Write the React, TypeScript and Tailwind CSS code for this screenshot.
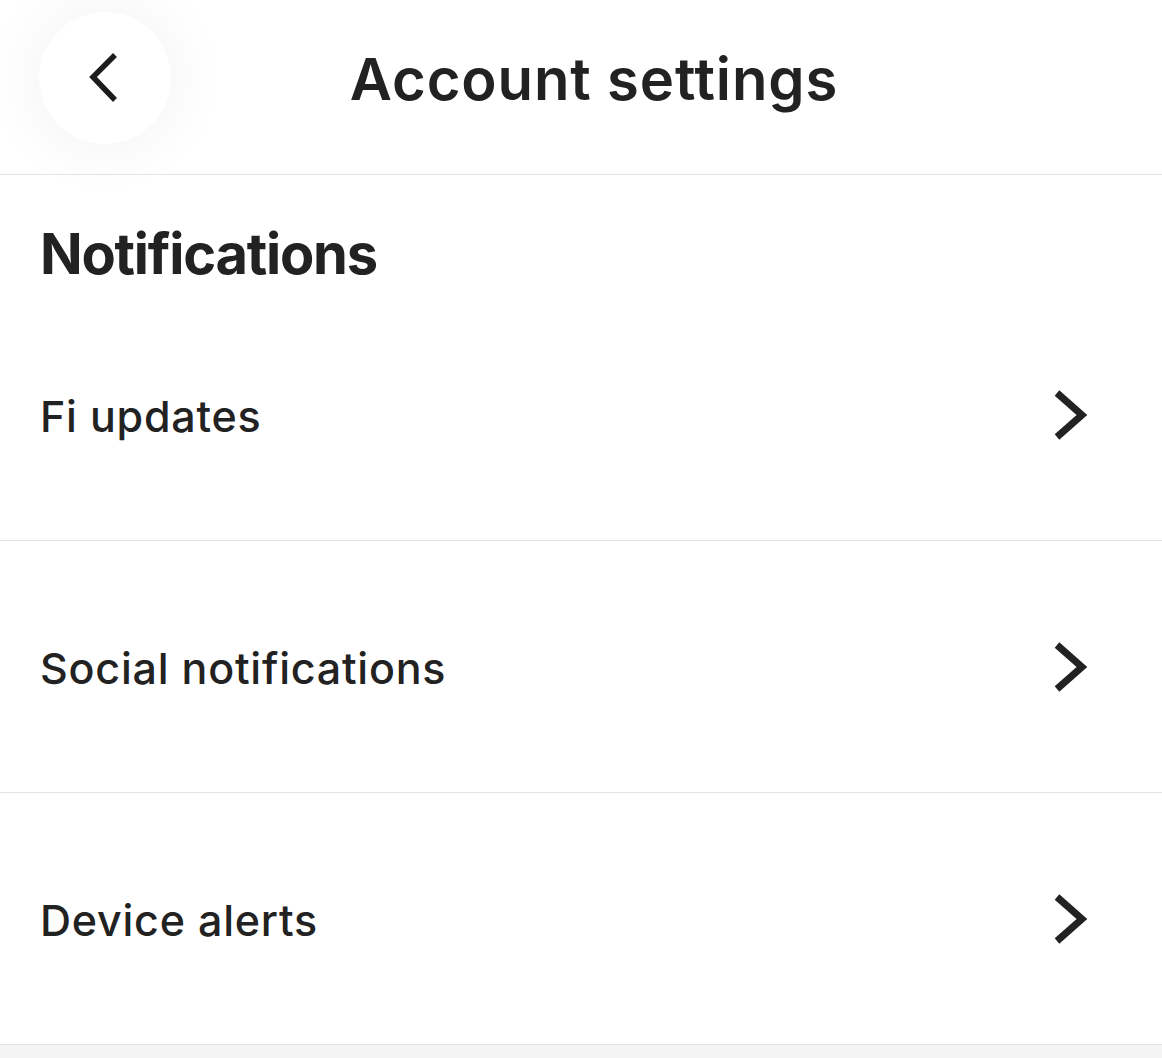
const rows = ['Fi updates', 'Social notifications', 'Device alerts'];

function ChevronRight() {
  return (
    <svg width="40" height="52" viewBox="0 0 40 52" fill="none" className="shrink-0">
      <path d="M7 4 L32 26 L7 48" stroke="#222222" strokeWidth="7" strokeLinejoin="miter" strokeLinecap="butt" />
    </svg>
  );
}

function ChevronLeft() {
  return (
    <svg width="36" height="52" viewBox="0 0 36 52" fill="none">
      <path d="M28 3 L6 25 L28 48" stroke="#1c1c1c" strokeWidth="5.5" strokeLinejoin="miter" strokeLinecap="butt" />
    </svg>
  );
}

export default function App() {
  return (
    <div className="min-h-[1058px] bg-[#f4f4f4] text-[#222222]" style={{ fontFamily: 'Inter, "Noto Sans", sans-serif' }}>
      <div className="bg-white">
        <header className="relative h-[175px] border-b border-[#e4e4e4] flex items-center">
          <button className="absolute left-[39px] top-[12px] w-[132px] h-[132px] rounded-full bg-white flex items-center justify-center shadow-[0_0_60px_10px_rgba(0,0,0,0.045)]">
            <ChevronLeft />
          </button>
          <h1 className="w-full text-center pl-[26px] pb-[16px] text-[58px] font-semibold tracking-[0.015em] leading-none">
            Account settings
          </h1>
        </header>

        <section>
          <h2 className="h-[114px] flex items-center px-[40px] pt-[44px] text-[56px] font-bold tracking-[-0.022em] leading-none">
            Notifications
          </h2>
          {rows.map(label => (
            <div key={label} className="h-[252px] flex items-center justify-between pl-[40px] pr-[72px] border-b border-[#e4e4e4]">
              <span className="pt-[4px] text-[43px] font-medium tracking-[0.018em] leading-none">{label}</span>
              <ChevronRight />
            </div>
          ))}
        </section>
      </div>
    </div>
  );
}
